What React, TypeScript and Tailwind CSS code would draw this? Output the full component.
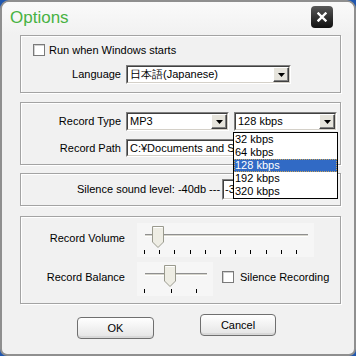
import React from "react";

const font = { fontFamily: '"Liberation Sans", Arial, sans-serif' };

function Arrow() {
  return (
    <div className="w-[16px] h-[15px] flex items-center justify-center bg-[#e6e4dc] border border-t-[#fff] border-l-[#fff] border-r-[#404040] border-b-[#404040] shadow-[inset_-1px_-1px_0_#808080]">
      <svg width="7" height="4" viewBox="0 0 7 4">
        <path d="M0 0H7L3.5 4Z" fill="#000" />
      </svg>
    </div>
  );
}

function Sunken({ className, children }: { className?: string; children?: React.ReactNode }) {
  return (
    <div className={"border border-t-[#808080] border-l-[#808080] border-b-white border-r-white " + (className || "")}>
      <div className="h-full w-full border border-t-[#404040] border-l-[#404040] border-b-[#d4d0c8] border-r-[#d4d0c8] bg-white flex items-center">
        {children}
      </div>
    </div>
  );
}

function Combo({ w, text, children }: { w: string; text: string; children?: React.ReactNode }) {
  return (
    <div className={"relative " + w}>
      <Sunken className="h-[19px] w-full">
        <span className="flex-1 pl-[2px] text-[11px] leading-none text-black whitespace-nowrap overflow-hidden">{text}</span>
        <Arrow />
      </Sunken>
      {children}
    </div>
  );
}

function Group({ className, children }: { className?: string; children?: React.ReactNode }) {
  return (
    <div className={"ml-[18px] w-[321px] border border-[#a3a3a3] shadow-[inset_1px_1px_0_#fff,1px_1px_0_#fff] " + (className || "")}>
      {children}
    </div>
  );
}

function Check() {
  return <div className="w-[12px] h-[12px] bg-white border border-[#7a7a7a] shadow-[inset_1px_1px_0_#d0d0d0]" />;
}

function Thumb() {
  return (
    <svg width="12" height="22" viewBox="0 0 12 22">
      <path d="M0.5 0.5H11.5V16L6 21.5L0.5 16Z" fill="#eeede4" stroke="#9a9a8e" />
      <path d="M1.5 1.5H10.5" stroke="#fff" />
    </svg>
  );
}

function Slider({ width, thumbX, ticks }: { width: number; thumbX: number; ticks: number[] }) {
  return (
    <div className="relative h-[34px] bg-[#f6f6f6]" style={{ width: width + 14 }}>
      <div className="absolute top-[11px] left-[8px] h-[3px] bg-[#d6d5cc] border-t border-t-[#8f8f8f] border-b border-b-white" style={{ width }} />
      <div className="absolute top-[3px]" style={{ left: thumbX }}>
        <Thumb />
      </div>
      {ticks.map((t) => (
        <div key={t} className="absolute top-[27px] w-[1px] h-[4px] bg-black" style={{ left: t }} />
      ))}
    </div>
  );
}

function XPButton({ label, className }: { label: string; className?: string }) {
  return (
    <div className={"h-[22px] rounded-[4px] border border-[#6f6f6f] bg-gradient-to-b from-white to-[#e4e4e4] shadow-[inset_0_-2px_0_#d8d8d8] flex items-center justify-center text-[11px] text-black " + (className || "")}>
      {label}
    </div>
  );
}

export default function App() {
  const volTicks = Array.from({ length: 11 }, (_, i) => 7 + Math.round(i * 15.2));
  return (
    <div className="w-[356px] h-[356px] bg-[#1f57b0]" style={font}>
      <div className="w-full h-full rounded-t-[9px] rounded-b-[7px] border-2 border-[#8f8f8f] bg-[#f1f1f1] flex flex-col overflow-hidden">
        {/* Title */}
        <div className="h-[33px] flex items-start justify-between pl-[8px] pr-[21px] bg-gradient-to-b from-[#fafafa] to-[#f1f1f1]">
          <span className="mt-[6px] text-[17px] leading-[20px] text-[#48b243]">Options</span>
          <div className="mt-[4px] w-[22px] h-[22px] rounded-[4px] bg-gradient-to-b from-[#5a5a5a] to-[#101010] flex items-center justify-center">
            <svg width="10" height="10" viewBox="0 0 10 10">
              <path d="M1.5 1.5L8.5 8.5M8.5 1.5L1.5 8.5" stroke="#fff" strokeWidth="2.4" strokeLinecap="square" />
            </svg>
          </div>
        </div>

        {/* Group 1 */}
        <Group className="h-[58px] pt-[8px] text-[11px] text-black">
          <div className="flex items-center pl-[12px] h-[12px]">
            <Check />
            <span className="ml-[4px]">Run when Windows starts</span>
          </div>
          <div className="flex items-center mt-[9px]">
            <span className="w-[100px] text-right">Language</span>
            <div className="ml-[5px]">
              <Combo w="w-[165px]" text={"日本語(Japanese)"} />
            </div>
          </div>
        </Group>

        {/* Group 2 */}
        <Group className="relative z-10 mt-[9px] h-[63px] pt-[9px] text-[11px] text-black">
          <div className="flex items-center">
            <span className="w-[100px] text-right">Record Type</span>
            <div className="ml-[5px]">
              <Combo w="w-[103px]" text="MP3" />
            </div>
            <div className="ml-[5px]">
              <Combo w="w-[103px]" text="128 kbps">
                <div className="absolute left-[-1px] top-[20px] w-[105px] border border-black bg-white text-[11px] leading-[13px]" style={{ fontFamily: '"Liberation Sans", "Noto Sans CJK JP", sans-serif' }}>
                  <div className="h-[13px] pl-[1px]">32 kbps</div>
                  <div className="h-[13px] pl-[1px]">64 kbps</div>
                  <div className="h-[13px] pl-[1px] bg-[#316ac5] text-white outline-1 outline-dotted outline-[#c9a45a] -outline-offset-1">128 kbps</div>
                  <div className="h-[13px] pl-[1px]">192 kbps</div>
                  <div className="h-[13px] pl-[1px]">320 kbps</div>
                </div>
              </Combo>
            </div>
          </div>
          <div className="flex items-center mt-[8px]">
            <span className="w-[100px] text-right">Record Path</span>
            <Sunken className="ml-[5px] h-[18px] w-[211px]">
              <span className="pl-[2px] whitespace-nowrap overflow-hidden" style={{ fontFamily: '"Liberation Sans", "Noto Sans CJK JP", sans-serif' }}>
                {"C:¥Documents and Settings¥"}
              </span>
            </Sunken>
          </div>
        </Group>

        {/* Group 3 */}
        <Group className="mt-[8px] h-[33px] flex items-center pl-[56px] text-[11px] text-black">
          <span>Silence sound level: -40db ---</span>
          <Sunken className="ml-[2px] h-[21px] w-[42px]">
            <span className="pl-[1px]">-30db</span>
          </Sunken>
        </Group>

        {/* Group 4 */}
        <Group className="mt-[10px] h-[88px] pt-[6px] text-[11px] text-black">
          <div className="flex items-start">
            <span className="w-[104px] text-right mt-[7px]">Record Volume</span>
            <div className="ml-[12px]">
              <Slider width={163} thumbX={15} ticks={volTicks} />
            </div>
          </div>
          <div className="flex items-start mt-[5px]">
            <span className="w-[104px] text-right mt-[7px]">Record Balance</span>
            <div className="ml-[12px]">
              <Slider width={62} thumbX={27} ticks={[7, 34, 59]} />
            </div>
            <div className="flex items-center ml-[9px] mt-[7px]">
              <Check />
              <span className="ml-[6px]">Silence Recording</span>
            </div>
          </div>
        </Group>

        {/* Buttons */}
        <div className="flex items-start mt-[10px] pl-[75px]">
          <XPButton label="OK" className="w-[77px] mt-[3px]" />
          <XPButton label="Cancel" className="w-[76px] ml-[46px]" />
        </div>
      </div>
    </div>
  );
}
